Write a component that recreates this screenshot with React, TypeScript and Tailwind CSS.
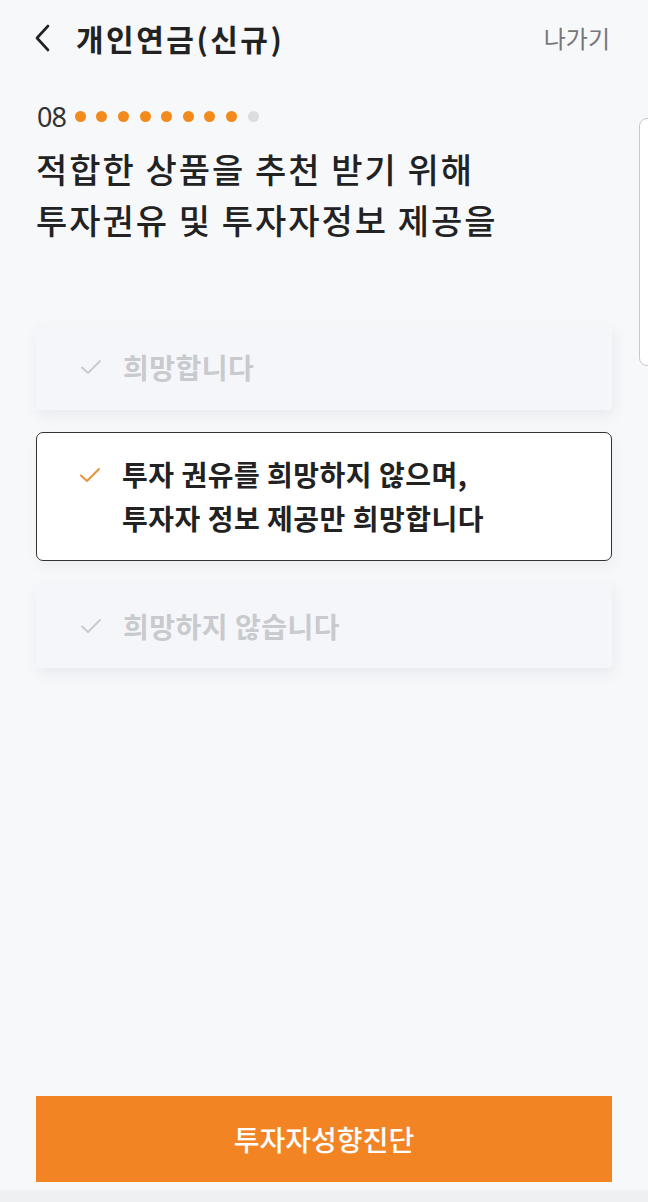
import React from "react";

const Check = ({ color }: { color: string }) => (
  <svg width="22" height="16" viewBox="0 0 22 16" fill="none">
    <path d="M2 8.5 L8 14 L20 2" stroke={color} strokeWidth="2" strokeLinecap="round" strokeLinejoin="round" />
  </svg>
);

export default function App() {
  const dots = [1, 1, 1, 1, 1, 1, 1, 1, 0];
  return (
    <div className="relative w-[648px] h-[1202px] bg-[#f7f8fa] flex flex-col font-['Noto_Sans_CJK_KR','Noto_Sans',sans-serif] text-[#222]">
      {/* header */}
      <div className="h-[76px] flex items-center pl-[33px] pr-[38px]">
        <svg width="20" height="28" viewBox="0 0 20 28" fill="none">
          <path d="M15 2 L4 14 L15 26" stroke="#222" strokeWidth="2.6" strokeLinecap="round" strokeLinejoin="round" />
        </svg>
        <div className="ml-[23px] text-[30px] font-bold tracking-[2.5px] leading-none">개인연금(신규)</div>
        <div className="ml-auto text-[24px] text-[#777] leading-none">나가기</div>
      </div>

      {/* progress */}
      <div className="mt-[26px] pl-[37px] flex items-center h-[28px]">
        <span className="text-[27px] leading-none text-[#333] font-['Noto_Sans',sans-serif] tracking-[-1px]">08</span>
        <div className="ml-[9px] flex items-center gap-[10.6px]">
          {dots.map((d, i) => (
            <span key={i} className={d ? "w-[11px] h-[11px] rounded-full bg-[#f28a1c]" : "w-[11px] h-[11px] rounded-full bg-[#dcdde0]"} />
          ))}
        </div>
      </div>

      {/* heading */}
      <div className="mt-[13px] pl-[36px] text-[34px] leading-[51px] font-medium text-[#222] tracking-[2px]">
        <div>적합한 상품을 추천 받기 위해</div>
        <div>투자권유 및 투자자정보 제공을</div>
      </div>

      {/* options */}
      <div className="mt-[79px] px-[36px] flex flex-col w-[648px]">
        <div className="w-[576px] h-[86px] shrink-0 bg-[#f5f6f9] rounded-[4px] shadow-[2px_6px_14px_rgba(40,50,80,0.07)] flex items-center pl-[44px]">
          <Check color="#c9cbd0" />
          <span className="ml-[21px] text-[28px] font-bold text-[#c8cace] tracking-[0.5px]">희망합니다</span>
        </div>
        <div className="mt-[22px] w-[576px] h-[129px] shrink-0 bg-white rounded-[7px] border-[1.5px] border-[#333] flex items-start pl-[42px] pt-[19px] shadow-[2px_6px_14px_rgba(40,50,80,0.05)]">
          <div className="mt-[15px]"><Check color="#e8923a" /></div>
          <div className="ml-[21px] text-[28px] font-bold text-[#222] leading-[44px] tracking-[0.5px]">
            <div>투자 권유를 희망하지 않으며,</div>
            <div>투자자 정보 제공만 희망합니다</div>
          </div>
        </div>
        <div className="mt-[22px] w-[576px] h-[85px] shrink-0 bg-[#f5f6f9] rounded-[4px] shadow-[2px_6px_14px_rgba(40,50,80,0.07)] flex items-center pl-[44px]">
          <Check color="#c9cbd0" />
          <span className="ml-[21px] text-[28px] font-bold text-[#c8cace] tracking-[0.5px]">희망하지 않습니다</span>
        </div>
      </div>

      <div className="flex-1" />

      {/* button */}
      <div className="px-[36px]">
        <div className="w-[576px] h-[86px] bg-[#f28424] flex items-center justify-center text-white text-[28px] font-medium">
          투자자성향진단
        </div>
      </div>
      <div className="mt-[8px] h-[12px] bg-[#eff0f2]" />

      {/* side element */}
      <div className="absolute left-[639px] top-[118px] w-[20px] h-[248px] rounded-[8px] border border-[#c8c9cc] bg-white" />
    </div>
  );
}
